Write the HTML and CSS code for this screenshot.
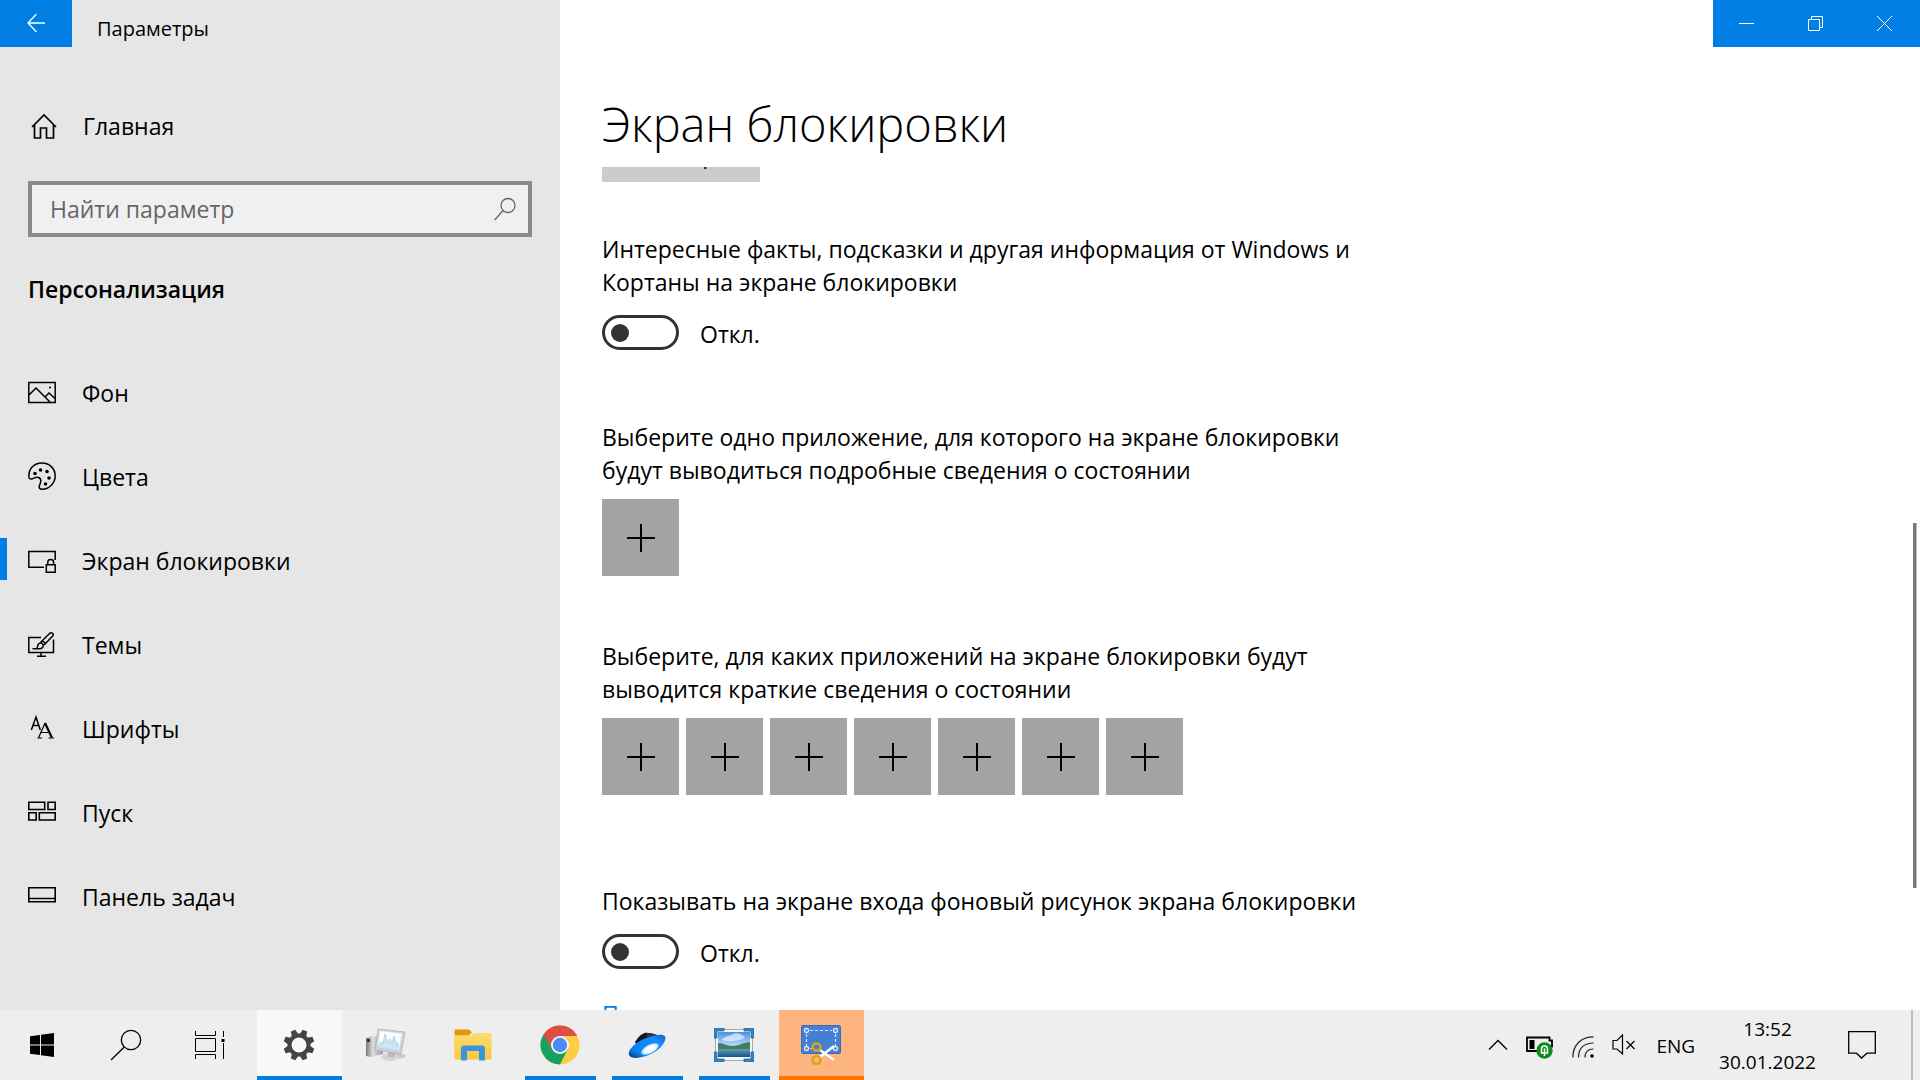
FILE: index.html
```html
<!DOCTYPE html>
<html lang="ru">
<head>
<meta charset="utf-8">
<meta name="viewport" content="width=device-width, initial-scale=1">
<title>Параметры</title>
<link rel="stylesheet" href="styles.css">
</head>
<body>
<div class="window">
  <aside class="sidebar">
    <header class="titlebar">
      <button class="back" type="button" aria-label="Назад">
        <svg width="18" height="20" viewBox="0 0 18 20" fill="none" stroke="#fff" stroke-width="1.3"><path d="M9.5 1 1 10l8.500 9M1 10h17"/></svg>
      </button>
      <span class="app-title">Параметры</span>
    </header>
    <a class="home" href="#">
      <svg width="28" height="28" viewBox="0 0 28 28" fill="none" stroke="#000" stroke-width="1.7"><path d="M2 15 14 3l12 12M4.500 13v13h6V16h6v10h7V13"/></svg>
      <span>Главная</span>
    </a>
    <label class="search">
      <input type="search" placeholder="Найти параметр" aria-label="Найти параметр">
      <svg width="22" height="24" viewBox="0 0 22 24" fill="none" stroke="#666" stroke-width="1.3"><circle cx="14" cy="8.500" r="7"/><path d="M9 13.500.7 23"/></svg>
    </label>
    <h2 class="category">Персонализация</h2>
    <nav class="nav">
      <a class="nav-item" href="#">
        <svg width="28" height="28" viewBox="0 0 28 28" fill="none" stroke="#000" stroke-width="1.500"><path d="M.8 4.500h26.400v20H.8zM1 17l7-7 14 14M17 19l4-4 6.500 6"/><path d="M21 9.500h2"/></svg>
        <span>Фон</span>
      </a>
      <a class="nav-item" href="#">
        <svg width="28" height="28" viewBox="0 0 28 28" fill="none" stroke="#000" stroke-width="1.500"><path d="M1 15.500C0 7 6 1 14 1s13.200 6 13.200 13S21 27.200 14.500 27.200c-2.500 0-4-1-3-3.700 1.500-3.500 2.500-8-2-8.300-2-.2-3 1-5 1.500-1.800.5-3.300.3-3.500-1.200z"/><g fill="#000" stroke="none"><circle cx="7" cy="11.500" r="1.800"/><circle cx="12.500" cy="8" r="1.800"/><circle cx="19" cy="9.500" r="1.800"/><circle cx="21" cy="16" r="1.800"/><circle cx="17.500" cy="22" r="1.800"/></g></svg>
        <span>Цвета</span>
      </a>
      <a class="nav-item is-active" href="#" aria-current="page">
        <svg width="28" height="28" viewBox="0 0 28 28" fill="none" stroke="#000" stroke-width="1.500"><path d="M16 21.300H.8V5.500h26.400V14"/><path d="M18.300 18.800h8.900v7.500h-8.900zM19.800 18.500v-2.200c0-3.600 5.800-3.600 5.800 0v2.200"/></svg>
        <span>Экран блокировки</span>
      </a>
      <a class="nav-item" href="#">
        <svg width="28" height="28" viewBox="0 0 28 28" fill="none" stroke="#000" stroke-width="1.500"><path d="M13 7.500H.8v15h24.700V9.500M13 23v3M9 26.300h9"/><path d="M4.500 18.800H11c3.500 0 4.800-2 4-4.300-1-2.300-4.300-2-5 .3-.3 1.600-.5 2.700-1.500 4M12.500 12.500l9-9c2-2 5 .5 3 2.800L16 15M14.500 10.500l3 3"/></svg>
        <span>Темы</span>
      </a>
      <a class="nav-item" href="#">
        <svg width="28" height="28" viewBox="0 0 28 28" fill="none" stroke="#000" stroke-width="1.500"><path d="M3.300 16 8 3l4.300 13M5 11.500h6"/><path d="m10.500 24 6.500-15" stroke-width="1.200"/><path d="m17 9 6.800 14.500" stroke-width="2.200"/><path d="M12.500 18.500h8M9.500 24H14M20.500 24H26" stroke-width="1.200"/></svg>
        <span>Шрифты</span>
      </a>
      <a class="nav-item" href="#">
        <svg width="28" height="28" viewBox="0 0 28 28" fill="none" stroke="#000" stroke-width="1.600"><path d="M.8 4.300h15.900v7.200H.8zM20 4.300h7.200v7.200H20zM.8 14.800h7.400V22H.8zM11.300 14.800h15.900V22H11.300z"/></svg>
        <span>Пуск</span>
      </a>
      <a class="nav-item" href="#">
        <svg width="28" height="28" viewBox="0 0 28 28" fill="none" stroke="#000" stroke-width="1.600"><path d="M.8 5.800h26.400v14H.8zM1 16.500h26"/></svg>
        <span>Панель задач</span>
      </a>
    </nav>
  </aside>

  <main class="main">
    <div class="caption">
      <button type="button" aria-label="Свернуть"><svg width="15" height="15" viewBox="0 0 15 15" stroke="#fff"><path d="M0 7.500h15"/></svg></button>
      <button type="button" aria-label="Восстановить"><svg width="15" height="15" viewBox="0 0 15 15" fill="none" stroke="#fff"><path d="M.5 3.500h11v11H.5zM3.500 3V.5h11v11H12"/></svg></button>
      <button type="button" aria-label="Закрыть"><svg width="15" height="15" viewBox="0 0 15 15" stroke="#fff"><path d="m0 0 15 15M15 0 0 15"/></svg></button>
    </div>
    <h1 class="page-title">Экран блокировки</h1>
    <div class="scroll">
      <div class="content">
        <button class="browse" type="button">Обзор</button>
        <section class="facts">
          <label class="text" for="facts">Интересные факты, подсказки и другая информация от Windows и Кортаны на экране блокировки</label>
          <div class="toggle-row"><input class="toggle" type="checkbox" id="facts"><span>Откл.</span></div>
        </section>
        <section class="detailed">
          <p class="text">Выберите одно приложение, для которого на экране блокировки будут выводиться подробные сведения о состоянии</p>
          <div class="tiles"><button class="tile" type="button" aria-label="Добавить приложение"></button></div>
        </section>
        <section class="brief">
          <p class="text">Выберите, для каких приложений на экране блокировки будут выводится краткие сведения о состоянии</p>
          <div class="tiles">
            <button class="tile" type="button" aria-label="Добавить приложение 1"></button>
            <button class="tile" type="button" aria-label="Добавить приложение 2"></button>
            <button class="tile" type="button" aria-label="Добавить приложение 3"></button>
            <button class="tile" type="button" aria-label="Добавить приложение 4"></button>
            <button class="tile" type="button" aria-label="Добавить приложение 5"></button>
            <button class="tile" type="button" aria-label="Добавить приложение 6"></button>
            <button class="tile" type="button" aria-label="Добавить приложение 7"></button>
          </div>
        </section>
        <section class="signin">
          <label class="text" for="signin">Показывать на экране входа фоновый рисунок экрана блокировки</label>
          <div class="toggle-row"><input class="toggle" type="checkbox" id="signin"><span>Откл.</span></div>
        </section>
        <a class="more" href="#">Параметры времени ожидания экрана</a>
      </div>
      <div class="scrollbar"><div class="thumb"></div></div>
    </div>
  </main>
</div>

<footer class="taskbar">
  <div class="system">
    <button type="button" aria-label="Пуск"><svg width="24" height="24" viewBox="0 0 24 24"><path d="M0 3.300 10 2v9.500H0zM11 1.800 24 0v11.500H11zM0 12.500h10V22L0 20.700zM11 12.500h13V24l-13-1.800z"/></svg></button>
    <button type="button" aria-label="Поиск"><svg width="32" height="32" viewBox="0 0 32 32" fill="none" stroke="#000" stroke-width="1.300"><circle cx="21" cy="11" r="9.700"/><path d="M14.300 18 1 31"/></svg></button>
    <button type="button" aria-label="Представление задач"><svg width="30" height="28" viewBox="0 0 30 28" fill="none" stroke="#000"><path d="M.5 0v4.500h20V0M.5 28v-4.500h20V28M.5 7.500h20v13H.5zM28.500 0v6M28.500 12v16"/><path d="M26.500 8h3v3h-3z" fill="#000" stroke="none"/></svg></button>
  </div>
  <div class="apps">
    <button class="app is-current" type="button" aria-label="Параметры"><svg width="32" height="32" viewBox="-16 -16 32 32" fill="#444"><g id="teeth"><path id="tooth" d="M-3.600-9.500-2.400-15.500h4.800l1.200 6zM-3.600 9.500l1.200 6h4.800l1.200-6z" transform="rotate(22.500)"/><use href="#tooth" transform="rotate(90)"/></g><use href="#teeth" transform="rotate(45)"/><circle r="9.500" fill="none" stroke="#444" stroke-width="4"/></svg></button>
    <button class="app" type="button" aria-label="Диспетчер"><svg width="40" height="34" viewBox="0 0 40 34"><defs><linearGradient id="pc"><stop stop-color="#777"/><stop offset=".4" stop-color="#ddd"/><stop offset="1" stop-color="#999"/></linearGradient></defs><ellipse cx="28" cy="28" rx="12" ry="3" fill="#c8c8c8"/><path d="M0 10 8 8l9 2v16L5 29l-5-1z" fill="url(#pc)"/><path d="M1 11h3v3H1z" fill="#333"/><ellipse cx="24" cy="29" rx="9" ry="4" fill="#d5d5d5"/><path d="m22 22 8 1-1 6h-7z" fill="#bbb"/><path d="m12 1 27 3-4 22-26-4z" fill="#d2d2d2" stroke="#aaa" stroke-width=".7"/><path d="m14 3 22 2.500-3.500 17-21-3z" fill="#f8fcff"/><path d="m12 18 3-4 2 2 2-10 3 9 2-4 2 5 2-8 3 10 1-3-1 8-19-3z" fill="#cfe5f3" stroke="#9fc9e2" stroke-width=".7"/></svg></button>
    <button class="app" type="button" aria-label="Проводник"><svg width="38" height="32" viewBox="0 0 38 32"><defs><linearGradient id="fold" x2="0" y2="1"><stop stop-color="#ffdc70"/><stop offset="1" stop-color="#f8c73e"/></linearGradient></defs><path d="M0 7h17l3-3h16c1 0 1.500.5 1.500 1.500V29c0 1-.5 1.500-1.500 1.500H2c-1 0-1.500-.5-1.500-1.500z" fill="url(#fold)"/><path d="M.5 2C.5 1 1 .5 2 .5h13l3 2.800-3 3.200H.5z" fill="#df9b00"/><path d="M7 31.500V20c0-2.500 1-3.500 3.500-3.500h17c2.500 0 3.500 1 3.500 3.500v11.500h-6V22H13v9.500z" fill="#3b95dc"/></svg></button>
    <button class="app is-running" type="button" aria-label="Google Chrome"><svg width="40" height="40" viewBox="-20 -20 40 40"><circle r="19.500" fill="#ffcd40"/><path d="M-16.900-9.800A19.500 19.500 0 0 1 16.900-9.800V-8.900H0L-7.700 4.400z" fill="#db4f45"/><path d="M-16.400-10.500A19.500 19.500 0 0 0 0 19.500L7.700 4.400H-7.700z" fill="#18a05f"/><circle r="9" fill="#f4f7fb"/><circle r="7.200" fill="#4c8bf5"/></svg></button>
    <button class="app is-running" type="button" aria-label="Яндекс.Диск"><svg width="38" height="26" viewBox="0 0 38 26"><defs><linearGradient id="disk" x1="0" y1="1" x2="1" y2="0"><stop stop-color="#0b335c"/><stop offset=".25" stop-color="#0a80f5"/><stop offset=".75" stop-color="#168cff"/><stop offset="1" stop-color="#0963c8"/></linearGradient><radialGradient id="glow"><stop stop-color="#fff"/><stop offset=".7" stop-color="#f2f9ff"/><stop offset="1" stop-color="#5cb1ff"/></radialGradient></defs><path d="M7 10C12 2 17 0 20 1l9 2-19 13z" fill="#10151f"/><path d="M18 1h5l6 2-9 4z" fill="#2c3543"/><path d="M1 23C-1 18 8 10 17 6.500S35 1 37 4.500 34 16 25 21 3 28 1 23z" fill="url(#disk)"/><ellipse cx="22" cy="17" rx="10" ry="4.500" transform="rotate(-27 22 17)" fill="url(#glow)"/></svg></button>
    <button class="app is-running" type="button" aria-label="Просмотр изображений"><svg width="40" height="34" viewBox="0 0 40 34"><defs><linearGradient id="sky" x2="0" y2="1"><stop stop-color="#4b8fe4"/><stop offset="1" stop-color="#d4ecfb"/></linearGradient><linearGradient id="sea" x2="0" y2="1"><stop stop-color="#6fa9c0"/><stop offset="1" stop-color="#12557d"/></linearGradient></defs><path d="M1.500 1.500h37v31h-37z" fill="#f4f6f7" stroke="#a9a9a9"/><path d="M4 4h32v17H4z" fill="url(#sky)"/><path d="M4 20h32v9H4z" fill="url(#sea)"/><path d="M4 15c6 0 9 3 14 3 7 0 12-4 18-4v7H4z" fill="#3f8060"/><path d="M8 12c3-5 7-3 11-6 4-2 9 1 12 3-3 4-16 5-23 3z" fill="#fff" opacity=".6"/><path d="M0 0h10v3H3v7H0zM30 0h10v10h-3V3h-7zM0 24h3v7h7v3H0zM37 24h3v10H30v-3h7z" fill="#3585c1" stroke="#286592" stroke-width=".8"/></svg></button>
    <button class="app is-alert" type="button" aria-label="Ножницы"><svg width="40" height="40" viewBox="0 0 40 40" fill="none"><path d="M.5 1.500C.5.700 1 .5 2 .5h36c1 0 1.500.5 1.500 1.500v25c0 1-.5 1.500-1.500 1.500H2c-1 0-1.500-.5-1.500-1.500z" fill="#447fd5" stroke="#3a6dae"/><path d="M9 5.500h22M5.500 9v12M34.500 9v12M9 23.500h5" stroke="#dbe9fb" stroke-width="1.200" stroke-dasharray="3 2"/><g stroke="#dbe9fb" stroke-width="1.300"><circle cx="5.500" cy="5.500" r="2"/><circle cx="34.500" cy="5.500" r="2"/><circle cx="5.500" cy="23.500" r="2"/><circle cx="34.500" cy="23.500" r="2"/></g><path d="m19 25 14 10M19 32l14-11" stroke="#fff" stroke-width="2.600"/><g stroke="#d5a714" stroke-width="2.500"><ellipse cx="15.500" cy="22" rx="4" ry="3.500"/><ellipse cx="15.500" cy="35" rx="4" ry="4"/></g></svg></button>
  </div>
  <div class="tray">
    <button type="button" aria-label="Скрытые значки"><svg width="20" height="12" viewBox="0 0 20 12" fill="none" stroke="#000" stroke-width="1.300"><path d="m1 10.500 9-9 9 9"/></svg></button>
    <button class="battery" type="button" aria-label="Батарея"><svg width="28" height="24" viewBox="0 0 28 24"><path d="M1 2.500h22.500v3H26v6h-2V16H1z" fill="#eee" stroke="#000" stroke-width="1.800"/><path d="M3.500 5h5v9h-5z"/><circle cx="18.500" cy="15.500" r="8.200" fill="#0b8a1d"/><path d="M15.500 18v-4c0-4 6-4 6 0v4zM18.500 13.500v7.500" fill="none" stroke="#fff" stroke-width="1.500"/></svg></button>
    <button class="network" type="button" aria-label="Сеть"><svg width="22" height="22" viewBox="0 0 22 22" fill="none" stroke="#222" stroke-width="1.200"><path d="M.8 21.500C.8 9 9 .8 21.500.8M6.500 21.500C6.500 12 12 7 21.500 7M13 21.500C13 16 16 13 21.500 13"/><circle cx="20" cy="20" r="1.800" fill="#000" stroke="none"/></svg></button>
    <button type="button" aria-label="Звук"><svg width="24" height="22" viewBox="0 0 24 22" fill="none" stroke="#000" stroke-width="1.200"><path d="M1 6.500h4l5.500-5.500v19L5 15H1zM14.500 7l8 8M22.500 7l-8 8"/></svg></button>
    <button class="lang" type="button">ENG</button>
    <button class="clock" type="button"><span>13:52</span><span>30.01.2022</span></button>
    <button class="notes" type="button" aria-label="Центр уведомлений"><svg width="28" height="28" viewBox="0 0 28 28" fill="none" stroke="#000" stroke-width="1.300"><path d="M.7.7h26.600v21.500H19L13.500 27 8.500 22.200H.7z"/></svg></button>
    <button class="desktop" type="button" aria-label="Показать рабочий стол"></button>
  </div>
</footer>
</body>
</html>
```
FILE: styles.css
```css
:root {
  --accent: #007ee3;
  --side: #e6e6e6;
  --bar: #eee;
}

* { box-sizing: border-box; }

body {
  margin: 0;
  height: 100vh;
  display: flex;
  flex-direction: column;
  overflow: hidden;
  background: #fff;
  color: #000;
  font: 23px/33px "Open Sans", "Noto Sans", sans-serif;
}

button, input { font: inherit; color: inherit; }

button {
  border: 0;
  padding: 0;
  background: none;
  display: flex;
  align-items: center;
  justify-content: center;
}

a { color: inherit; text-decoration: none; }
h1, h2, p { margin: 0; font-weight: 400; }
svg { display: block; flex: none; }

.window {
  flex: 1;
  min-height: 0;
  display: grid;
  grid-template-columns: 560px 1fr;
}

/* Sidebar */
.sidebar { background: var(--side); }
.titlebar { display: flex; gap: 25px; }
.back { width: 72px; height: 47px; padding-bottom: 2px; background: var(--accent); }
.app-title { padding-top: 12px; font-size: 20px; }

.home {
  display: flex;
  align-items: center;
  gap: 25px;
  height: 56px;
  margin-top: 51px;
  padding: 0 30px;
}

.search {
  display: flex;
  align-items: center;
  height: 56px;
  margin: 27px 28px 0;
  padding: 0 12px 0 18px;
  border: 4px solid #8a8a8a;
  background: #f0f0f0;
}
.search input {
  flex: 1;
  min-width: 0;
  height: 33px;
  padding: 0;
  border: 0;
  outline: 0;
  background: none;
}
.search input::placeholder { color: #666; opacity: 1; }

.category {
  margin: 36px 28px 0;
  font-size: 23px;
  line-height: 33px;
  font-weight: 600;
}

.nav { margin-top: 43px; }
.nav-item {
  display: flex;
  align-items: center;
  gap: 26px;
  height: 84px;
  padding: 1px 28px 0;
}
.nav-item span { padding-top: 3px; }
.nav-item.is-active {
  background: linear-gradient(var(--accent), var(--accent)) left center / 7px 42px no-repeat;
}

/* Main pane */
.main {
  min-width: 0;
  min-height: 0;
  display: flex;
  flex-direction: column;
}
.caption {
  display: flex;
  align-self: flex-end;
  background: var(--accent);
}
.caption button { width: 69px; height: 47px; padding: 0 2px 1px 0; }
.page-title {
  padding: 45px 42px 11px;
  font-size: 47px;
  line-height: 64px;
  font-weight: 300;
}
.scroll {
  flex: 1;
  min-height: 0;
  display: flex;
  overflow: hidden;
}
.content {
  flex: 1;
  margin-top: -41px;
  padding-left: 42px;
}
.browse { width: 158px; height: 56px; background: #ccc; }
.text { display: block; max-width: 768px; }
.facts { margin-top: 51px; }
.detailed { margin-top: 71px; }
.brief { margin-top: 64px; }
.signin { margin-top: 90px; }
.more { display: inline-block; margin-top: 29px; color: var(--accent); }

.toggle-row {
  display: flex;
  align-items: center;
  gap: 21px;
  height: 35px;
  margin-top: 16px;
}
.toggle-row span { padding-top: 3px; }
.toggle {
  appearance: none;
  display: flex;
  align-items: center;
  width: 77px;
  height: 35px;
  margin: 0;
  padding: 0 6px;
  border: 3px solid #333;
  border-radius: 18px;
}
.toggle::before {
  content: "";
  width: 18px;
  height: 18px;
  border-radius: 50%;
  background: #333;
}
.toggle:checked { justify-content: flex-end; }

.tiles { display: flex; gap: 7px; margin-top: 12px; }
.tile {
  width: 77px;
  height: 77px;
  background:
    linear-gradient(#000, #000) center / 28px 2px no-repeat,
    linear-gradient(#000, #000) center / 2px 28px no-repeat,
    #a3a3a3;
}

.scrollbar {
  width: 7px;
  display: grid;
  grid-template-rows: 356fr 365fr 122fr;
}
.thumb { grid-row: 2; width: 4px; background: #7a7a7a; border-right: 1px solid #bbb; }

/* Taskbar */
.taskbar {
  display: flex;
  height: 70px;
  background: var(--bar);
  font-size: 19px;
}
.system { display: flex; }
.system button { width: 84px; }
.apps { display: flex; gap: 2px; margin-left: 5px; }
.app { width: 85px; padding-right: 2px; }
.app.is-current {
  background: linear-gradient(var(--accent), var(--accent)) bottom / 100% 4px no-repeat, #f8f8f8;
}
.app.is-running {
  background: linear-gradient(var(--accent), var(--accent)) bottom / 71px 4px no-repeat;
}
.app.is-alert {
  background: linear-gradient(#ff7300, #ff7300) bottom / 100% 4px no-repeat, #fdb47e;
}
.tray { display: flex; gap: 18px; margin-left: auto; }
.battery { padding-top: 4px; }
.network { padding-top: 3px; }
.lang { padding: 3px 6px 0 2px; }
.clock { flex-direction: column; padding-top: 2px; }
.notes { margin: 0 17px 0 14px; }
.desktop { width: 9px; border-left: 2px solid #bcbcbc; }
```
